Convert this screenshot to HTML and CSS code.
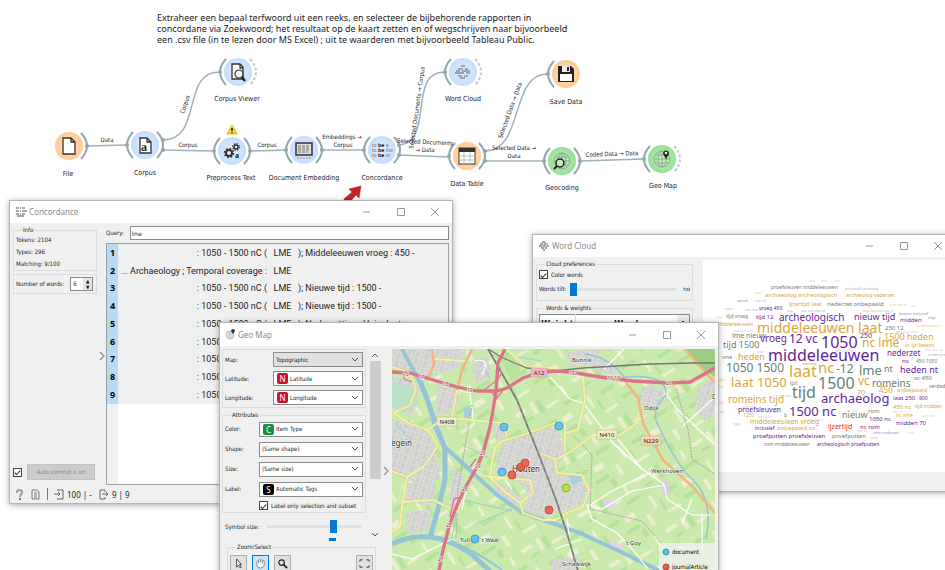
FILE: index.html
```
<!DOCTYPE html>
<html lang="nl">
<head>
<meta charset="utf-8">
<title>Orange workflow</title>
<link rel="stylesheet" href="styles.css">
</head>
<body>
<main class="desktop">
<p class="annotation">Extraheer een bepaal terfwoord uit een reeks, en selecteer de bijbehorende rapporten in<br>concordane via Zoekwoord; het resultaat op de kaart zetten en of wegschrijven naar bijvoorbeeld<br>een .csv file (in te lezen door MS Excel) ; uit te waarderen met bijvoorbeeld Tableau Public.</p>

<svg class="workflow" width="945" height="210" viewBox="0 0 945 210">
  <defs>
    <radialGradient id="blue"><stop offset="0" stop-color="#e3eefe"/><stop offset="1" stop-color="#c5ddfb"/></radialGradient>
    <radialGradient id="orange"><stop offset="0" stop-color="#ffe6c8"/><stop offset="1" stop-color="#ffcb93"/></radialGradient>
    <radialGradient id="green"><stop offset="0" stop-color="#c9f5c6"/><stop offset="1" stop-color="#93e092"/></radialGradient>
    <g id="in"><path class="arc" d="M-12-13Q-24 0-12 13"/><circle class="port" cx="-18" cy="0" r="2"/></g>
    <path id="out" class="arc" d="M12-13Q24 0 12 13"/>
    <path id="none" class="arc dashed" d="M12-13Q24 0 12 13"/>
    <g id="globe" fill="none" stroke="#93ab93" stroke-width="1"><circle r="8"/><ellipse rx="4" ry="8"/><path d="M-8 0H8M0-8V8M-7-4H7M-7 4H7"/></g>
  </defs>
  <g class="links">
    <path d="M87 146L127 145"/>
    <path d="M163 140C203 140 181 72 219 72"/>
    <path d="M163 150L213 151"/>
    <path d="M251 151L285 150"/>
    <path d="M322 150H363"/>
    <path d="M400 145C434 140 408 72 444 72"/>
    <path d="M400 155L448 157"/>
    <path d="M486 151C524 150 510 74 547 74"/>
    <path d="M486 161H543"/>
    <path d="M580 161L644 159"/>
  </g>
  <g class="port">
    <circle cx="87" cy="146" r="2"/><circle cx="163" cy="140" r="2"/><circle cx="163" cy="150" r="2"/><circle cx="250" cy="151" r="2"/><circle cx="322" cy="150" r="2"/><circle cx="399" cy="145" r="2"/><circle cx="399" cy="155" r="2"/><circle cx="485" cy="151" r="2"/><circle cx="485" cy="161" r="2"/><circle cx="580" cy="161" r="2"/>
  </g>
  <g transform="translate(69 146)"><circle r="14" fill="url(#orange)"/><use href="#out"/><path d="M-6-8H2L6-4V8H-6ZM2-8V-4H6" fill="#fff" stroke="#333" stroke-width="1.3"/></g>
  <g transform="translate(145 145)"><circle r="14" fill="url(#blue)"/><use href="#in"/><use href="#out"/><path d="M-5-7H2L6-3V8H-5ZM2-7V-3H6" fill="#fff" stroke="#333" stroke-width="1.3"/><text class="glyph" x="-4" y="6">a</text></g>
  <g transform="translate(238 72)"><circle r="14" fill="url(#blue)"/><use href="#in"/><use href="#none"/><path d="M-6-8H2L5-5V7H-6ZM2-8V-4H5" fill="#fff" stroke="#333" stroke-width="1.3"/><circle cx="1" cy="2" r="4" fill="#eef5fe" stroke="#333" stroke-width="1.2"/><path d="M4 5L7 9" stroke="#222" stroke-width="2.5"/></g>
  <g transform="translate(232 151)"><circle r="14" fill="url(#blue)"/><use href="#in"/><use href="#out"/><g fill="none" stroke="#333"><circle cx="-3" cy="2" r="3" stroke-width="2"/><circle cx="-3" cy="2" r="4.500" stroke-width="1.500" stroke-dasharray="1.800 1.700"/><circle cx="4" cy="-4" r="2" stroke-width="1.500"/><circle cx="4" cy="-4" r="3.300" stroke-width="1.300" stroke-dasharray="1.400 1.200"/></g><text class="glyph small" x="3" y="7">a</text></g>
  <path d="M232 125L237 134H227Z" fill="#ffd51e" stroke="#e6b400" stroke-width="1"/><path d="M232 128V131M232 132V133" stroke="#222" stroke-width="1.500"/>
  <g transform="translate(304 150)"><circle r="14" fill="url(#blue)"/><use href="#in"/><use href="#out"/><rect x="-8" y="-7" width="16" height="12" fill="#ddd" stroke="#333" stroke-width="1.500"/><path d="M-6-4H6M-6-2H6M-6 0H6M-6 2H4" stroke="#777" stroke-width="1" stroke-dasharray="3 1"/><path d="M-7 8H7" stroke="#aab" stroke-width="1.500" stroke-dasharray="2 1"/></g>
  <g transform="translate(382 150)"><circle r="14" fill="url(#blue)"/><use href="#in"/><use href="#out"/><g class="tobe"><text x="-10" y="-3">to <tspan>be</tspan> a</text><text x="-10" y="2">to <tspan>be</tspan> the</text><text x="-10" y="7">to <tspan>be</tspan> or</text></g></g>
  <g transform="translate(463 72)"><circle r="14" fill="url(#blue)"/><use href="#in"/><use href="#none"/><path d="M-2-6H2M-5-3H0M2-3H5M-7-1H-3M-1-1H7M-8 1H1M3 1H7M-5 4H-1M1 4H5M-3 6H2" stroke="#56636f" stroke-width="1.200"/></g>
  <g transform="translate(467 156)"><circle r="14" fill="url(#orange)"/><use href="#in"/><use href="#out"/><rect x="-8" y="-8" width="16" height="16" fill="#fff" stroke="#333"/><rect x="-8" y="-8" width="16" height="4" fill="#333"/><path d="M-3-4V8M3-4V8M-8 0H8M-8 4H8" stroke="#bbb" stroke-width="1"/></g>
  <g transform="translate(566 74)"><circle r="14" fill="url(#orange)"/><use href="#in"/><path d="M-8-8H5L8-5V8H-8Z" fill="#222"/><rect x="-4" y="-8" width="8" height="6" fill="#eee"/><rect x="1" y="-7" width="2" height="4" fill="#222"/><rect x="-6" y="0" width="12" height="7" fill="#fff"/></g>
  <g transform="translate(562 161)"><circle r="14" fill="url(#green)"/><use href="#in"/><use href="#out"/><use href="#globe"/><circle cx="-2" cy="2" r="4" fill="#bfe8bd" stroke="#222" stroke-width="1.500"/><path d="M-5 5L-8 8" stroke="#222" stroke-width="2"/></g>
  <g transform="translate(662 159)"><circle r="14" fill="url(#green)"/><use href="#in"/><use href="#none"/><use href="#globe"/><path d="M4 0L1-5A3 3.500 0 1 1 7-5Z" fill="#222"/><circle cx="4" cy="-6" r="1.300" fill="#fff"/></g>
  <g class="names">
    <text x="68" y="176">File</text><text x="145" y="175">Corpus</text><text x="237" y="101">Corpus Viewer</text><text x="231" y="180">Preprocess Text</text><text x="304" y="180">Document Embedding</text><text x="382" y="180">Concordance</text><text x="463" y="101">Word Cloud</text><text x="467" y="186">Data Table</text><text x="566" y="104">Save Data</text><text x="562" y="190">Geocoding</text><text x="663" y="188">Geo Map</text>
  </g>
  <g class="channels">
    <text x="107" y="142">Data</text><text x="188" y="147">Corpus</text><text x="267" y="147">Corpus</text><text x="342" y="139">Embeddings →</text><text x="343" y="147">Corpus</text><text transform="translate(425 144) rotate(3)">Selected Documents</text><text x="425" y="152">→ Data</text><text x="514" y="150">Selected Data →</text><text x="514" y="158">Data</text><text transform="translate(612 156) rotate(-2)">Coded Data → Data</text><text transform="translate(187 105) rotate(-72)">Corpus</text><text transform="translate(419 108) rotate(-82)">Selected Documents → Corpus</text><text transform="translate(512 111) rotate(-70)">Selected Data → Data</text>
  </g>
  <path d="M361 186L349 189L352 192L344 199V204H348L356 195L359 198Z" fill="#c8222b" stroke="#a3262c" stroke-width="0.500"/>
</svg>

<section class="window concordance" aria-label="Concordance">
  <header class="titlebar">
    <svg class="app" viewBox="0 0 12 10" width="12" height="10"><path d="M1 1H4M1 4H4M1 7H4M5 1H6M5 4H6M5 7H6M7 1H10M7 4H12M7 7H10M2 9H9" stroke="#888" stroke-width="1.300"/></svg>
    <h2>Concordance</h2>
    <button class="wbtn" aria-label="Minimize"><svg viewBox="0 0 8 8"><path d="M0 4H7"/></svg></button><button class="wbtn" aria-label="Maximize"><svg viewBox="0 0 8 8"><path d="M0.500 0.500H7.500V7.500H0.500Z"/></svg></button><button class="wbtn" aria-label="Close"><svg viewBox="0 0 8 8"><path d="M0 0L8 8M8 0L0 8"/></svg></button>
  </header>
  <div class="conc-body">
    <aside class="conc-side">
      <fieldset class="group info"><legend>Info</legend><p>Tokens: 2104</p><p>Types: 296</p><p>Matching: 9/100</p></fieldset>
      <div class="group words"><label for="nw">Number of words:</label><span class="spin"><input id="nw" type="text" value="6"><span class="steps"><button aria-label="More">▲</button><button aria-label="Fewer">▼</button></span></span></div>
      <div class="commit"><input type="checkbox" class="check" checked aria-label="Auto commit"><button class="auto" disabled>Auto commit is on</button></div>
    </aside>
    <button class="collapse" aria-label="Collapse"><svg viewBox="0 0 5 8" width="5" height="8"><path d="M0 0L4 4L0 8"/></svg></button>
    <div class="conc-main">
      <div class="query"><label for="q">Query:</label><input id="q" type="text" value="lme"></div>
      <div class="sheet">
        <table>
          <tbody>
          <tr><th>1</th><td class="left">: 1050 - 1500 nC (</td><td class="key">LME</td><td>); Middeleeuwen vroeg : 450 -</td></tr>
          <tr><th>2</th><td class="left">... Archaeology ; Temporal coverage :</td><td class="key">LME</td><td></td></tr>
          <tr><th>3</th><td class="left">: 1050 - 1500 nC (</td><td class="key">LME</td><td>); Nieuwe tijd : 1500 -</td></tr>
          <tr><th>4</th><td class="left">: 1050 - 1500 nC (</td><td class="key">LME</td><td>); Nieuwe tijd : 1500 -</td></tr>
          <tr><th>5</th><td class="left">: 1050 - 1500 nC (</td><td class="key">LME</td><td>); Nederzetting ; Huisplaats</td></tr>
          <tr><th>6</th><td class="left">: 1050 - 1500 nC (</td><td class="key">LME</td><td></td></tr>
          <tr><th>7</th><td class="left">: 1050 - 1500 nC (</td><td class="key">LME</td><td></td></tr>
          <tr><th>8</th><td class="left">: 1050 - 1500 nC (</td><td class="key">LME</td><td></td></tr>
          <tr><th>9</th><td class="left">: 1050 - 1500 nC (</td><td class="key">LME</td><td></td></tr>
          </tbody>
        </table>
      </div>
    </div>
  </div>
  <footer class="status">
    <svg width="8" height="11" viewBox="0 0 8 11"><path d="M1 4C0 0 7 0 6 4C6 5 4 5 4 8M4 9V11" fill="none" stroke="#777" stroke-width="2"/><path d="M1 4C0 0 7 0 6 4C6 5 4 5 4 8" fill="none" stroke="#eee" stroke-width="0.700"/></svg>
    <svg width="9" height="11" viewBox="0 0 9 11"><path d="M1 1H6L8 3V10H1ZM3 4H6M3 6H6M3 8H6" fill="none" stroke="#777"/></svg>
    <i></i>
    <svg width="10" height="11" viewBox="0 0 10 11"><path d="M3 1H9V10H3M0 5H6M4 3L6 5L4 7" fill="none" stroke="#666"/></svg><span>100 | -</span>
    <svg width="10" height="11" viewBox="0 0 10 11"><path d="M6 3V1H1V10H6V8M3 5H9M7 3L9 5L7 7" fill="none" stroke="#666"/></svg><span>9 | 9</span>
  </footer>
</section>

<section class="window cloud" aria-label="Word Cloud">
  <header class="titlebar">
    <svg class="app" viewBox="0 0 12 10" width="12" height="10"><path d="M4 1H8M2 3H10M1 5H11M3 7H9M5 9H7" stroke="#888" stroke-width="1.300" stroke-dasharray="3 0.600"/></svg>
    <h2>Word Cloud</h2>
    <button class="wbtn" aria-label="Minimize"><svg viewBox="0 0 8 8"><path d="M0 4H7"/></svg></button><button class="wbtn" aria-label="Maximize"><svg viewBox="0 0 8 8"><path d="M0.500 0.500H7.500V7.500H0.500Z"/></svg></button><button class="wbtn" aria-label="Close"><svg viewBox="0 0 8 8"><path d="M0 0L8 8M8 0L0 8"/></svg></button>
  </header>
  <div class="cloud-body">
    <aside class="cloud-side">
      <fieldset class="group prefs"><legend>Cloud preferences</legend>
        <label class="tick"><input type="checkbox" class="check" checked>Color words</label>
        <div class="tilt"><label for="tilt">Words tilt:</label><input id="tilt" type="range" min="0" max="3" value="0"><span>no</span></div>
      </fieldset>
      <fieldset class="group weights"><legend>Words &amp; weights</legend>
        <table><thead><tr><th>Weight</th><th>Word</th><th class="up"><svg viewBox="0 0 6 4" width="6" height="4"><path d="M0 4L3 1L6 4"/></svg></th></tr></thead></table>
      </fieldset>
    </aside>
    <svg class="words-canvas" width="254" height="212" viewBox="0 0 254 212">
      <g stroke-width="1" stroke-dasharray="6 1">
        <path d="M106 21H113M118 21H125M131 21H137" stroke="#ddd"/><path d="M52 33H59M187 45H204M208 46H213" stroke="#f0d5a8"/><path d="M52 41H63M42 50H60M22 49H30M84 51H91M98 51H122M160 51H190" stroke="#cfc4dd"/><path d="M14 63H20M193 72H215M30 71H50M120 70H138M222 90H240" stroke="#d5dbd7"/><path d="M54 92H62M133 91H150M15 152H22M63 152H78M97 131H103M76 136H88M14 143H21M60 119H66" stroke="#d9cfe2"/><path d="M142 151H156M190 152H200M219 156H232M104 160H120M205 173H211M55 157H70" stroke="#d8ddda"/><path d="M100 104H114M132 135H143M154 171H164M40 147H52" stroke="#f1c9b5"/>
      </g>
      <g class="g">
        <text x="68" y="29" class="s5">proefsleuven middeleeuwen</text><text x="142" y="30" class="s4">inclusief verdedig</text><text x="124" y="46" class="s6">nederzet onbepaald</text><text x="23" y="58" class="s5">tijd vroeg</text><text x="182" y="70" class="s6">250 12</text><text x="29" y="78" class="s7">lme nieuw</text><text x="20" y="88" class="s9">tijd 1500</text><text x="19" y="99" class="s5">vme</text><text x="225" y="96" class="s4">onderzoek</text><text x="213" y="103" class="s5">450 1050</text><text x="23" y="112" class="s12">1050 1500</text><text x="133" y="113" class="s12">-12</text><text x="156" y="115" class="s13">lme</text><text x="181" y="112" class="s9">nt</text><text x="87" y="125" class="s6">ijzl</text><text x="89" y="138" class="s16">tijd</text><text x="115" y="129" class="s16">1500</text><text x="169" y="127" class="s10">romeins</text><text x="211" y="120" class="s6">vc 450</text><text x="226" y="128" class="s5">verdedig</text><text x="139" y="158" class="s9">nieuw</text><text x="165" y="153" class="s6">rom</text><text x="30" y="166" class="s4">150</text><text x="81" y="157" class="s5">b</text><text x="129" y="178" class="s6">proefputten</text><text x="61" y="186" class="s5">rom middeleeuwen</text>
      </g>
      <g class="o">
        <text x="62" y="37" class="s6">archaeolog archeologisch</text><text x="143" y="37" class="s5">archaeolog nederzet</text><text x="86" y="46" class="s6">ijzertijd laat</text><text x="13" y="59" class="s4">725</text><text x="15" y="66" class="s5">middeleeuwen</text><text x="54" y="73" class="s14">middeleeuwen laat</text><text x="212" y="67" class="s4">vondstanalys</text><text x="181" y="80" class="s9">1500 heden</text><text x="159" y="87" class="s12">nc lme</text><text x="202" y="87" class="s5">vc ijzl bewon</text><text x="35" y="100" class="s9">heden</text><text x="99" y="105" class="s4">coverag</text><text x="86" y="117" class="s16">laat</text><text x="115" y="113" class="s15">nc</text><text x="28" y="127" class="s13">laat 1050</text><text x="16" y="121" class="s4">gk7</text><text x="16" y="128" class="s4">nc</text><text x="155" y="125" class="s12">vc</text><text x="154" y="135" class="s7">70</text><text x="176" y="133" class="s8">450</text><text x="194" y="132" class="s6">onbepaald</text><text x="25" y="143" class="s10">romeins tijd</text><text x="190" y="149" class="s6">450 nc</text><text x="212" y="148" class="s5">tijd midden</text><text x="40" y="157" class="s5">1250</text><text x="193" y="157" class="s5">nc vme</text><text x="47" y="164" class="s7">middeleeuwen vroeg</text><text x="74" y="170" class="s6">onbepaald nx</text><text x="167" y="179" class="s4">terp</text>
      </g>
      <g class="p">
        <text x="34" y="42" class="s4">wierd</text><text x="56" y="50" class="s5">vroeg 450</text><text x="53" y="59" class="s6">tijd 12</text><text x="76" y="61" class="s10">archeologisch</text><text x="151" y="60" class="s9">nieuw tijd</text><text x="196" y="55" class="s4">bewon inclusief</text><text x="197" y="62" class="s6">midden</text><text x="225" y="59" class="s4">nhp</text><text x="57" y="82" class="s10">vroeg</text><text x="86" y="83" class="s12">12 vc</text><text x="118" y="88" class="s16">1050</text><text x="157" y="78" class="s7">250</text><text x="65" y="101" class="s16">middeleeuwen</text><text x="184" y="96" class="s8">nederzet</text><text x="199" y="103" class="s6">nx</text><text x="197" y="113" class="s9">heden nt</text><text x="118" y="143" class="s13">archaeolog</text><text x="190" y="140" class="s6">laat 250</text><text x="216" y="140" class="s5">900</text><text x="35" y="152" class="s7">proefsleuven</text><text x="86" y="156" class="s13">1500 nc</text><text x="166" y="161" class="s6">1050 nc</text><text x="193" y="165" class="s6">midden 70</text><text x="52" y="170" class="s5">inclusief</text><text x="157" y="169" class="s6">nc rom</text><text x="50" y="178" class="s6">proefputten proefsleuven</text><text x="170" y="174" class="s4">vme nederzet</text><text x="114" y="186" class="s5">archeologisch proefputten</text>
      </g>
      <text x="125" y="169" class="s7 r">ijzertijd</text>
    </svg>
  </div>
</section>

<section class="window geo" aria-label="Geo Map">
  <header class="titlebar">
    <svg class="app" viewBox="0 0 11 11" width="11" height="11"><g fill="none" stroke="#bbb"><circle cx="5" cy="6" r="4"/><path d="M1 6H9M5 2V10M2 4H8M2 8H8"/></g><path d="M8 5L6 2A2 2 0 1 1 10 2Z" fill="#333"/></svg>
    <h2>Geo Map</h2>
    <button class="wbtn" aria-label="Minimize"><svg viewBox="0 0 8 8"><path d="M0 4H7"/></svg></button><button class="wbtn" aria-label="Maximize"><svg viewBox="0 0 8 8"><path d="M0.500 0.500H7.500V7.500H0.500Z"/></svg></button><button class="wbtn" aria-label="Close"><svg viewBox="0 0 8 8"><path d="M0 0L8 8M8 0L0 8"/></svg></button>
  </header>
  <div class="geo-body">
    <aside class="geo-side">
      <div class="geo-scroll">
        <div class="geo-controls">
          <div class="group place">
            <div class="field"><label for="map">Map:</label><span class="combo grey"><select id="map"><option>Topographic</option></select><svg viewBox="0 0 6 4" width="6" height="4"><path d="M0 0L3 3L6 0"/></svg></span></div>
            <div class="field"><label for="lat">Latitude:</label><span class="combo"><b class="red">N</b><select id="lat"><option>Latitude</option></select><svg viewBox="0 0 6 4" width="6" height="4"><path d="M0 0L3 3L6 0"/></svg></span></div>
            <div class="field"><label for="lon">Longitude:</label><span class="combo"><b class="red">N</b><select id="lon"><option>Longitude</option></select><svg viewBox="0 0 6 4" width="6" height="4"><path d="M0 0L3 3L6 0"/></svg></span></div>
          </div>
          <fieldset class="group attrs"><legend>Attributes</legend>
            <div class="field"><label for="col">Color:</label><span class="combo"><b class="grn">C</b><select id="col"><option>Item Type</option></select><svg viewBox="0 0 6 4" width="6" height="4"><path d="M0 0L3 3L6 0"/></svg></span></div>
            <div class="field"><label for="shp">Shape:</label><span class="combo"><select id="shp"><option>(Same shape)</option></select><svg viewBox="0 0 6 4" width="6" height="4"><path d="M0 0L3 3L6 0"/></svg></span></div>
            <div class="field"><label for="siz">Size:</label><span class="combo"><select id="siz"><option>(Same size)</option></select><svg viewBox="0 0 6 4" width="6" height="4"><path d="M0 0L3 3L6 0"/></svg></span></div>
            <div class="field"><label for="lab">Label:</label><span class="combo"><b class="blk">S</b><select id="lab"><option>Automatic Tags</option></select><svg viewBox="0 0 6 4" width="6" height="4"><path d="M0 0L3 3L6 0"/></svg></span></div>
            <label class="tick only"><input type="checkbox" class="check" checked>Label only selection and subset</label>
          </fieldset>
          <div class="slide"><label for="sym">Symbol size:</label><input id="sym" type="range" min="0" max="100" value="72"></div>
          <div class="slide next"><span></span><input type="range" min="0" max="100" value="71" aria-label="Opacity"></div>
        </div>
        <div class="scrollbar"><button aria-label="Scroll up"><svg viewBox="0 0 6 4" width="6" height="4"><path d="M0 4L3 1L6 4"/></svg></button><span></span><button aria-label="Scroll down"><svg viewBox="0 0 6 4" width="6" height="4"><path d="M0 0L3 3L6 0"/></svg></button></div>
      </div>
      <fieldset class="group zoom"><legend>Zoom/Select</legend>
        <button aria-label="Select"><svg viewBox="0 0 12 12"><path d="M4 1V10L6 8L8 11L9 10L7 7H9Z" fill="#fff" stroke="#222" stroke-width="0.900"/></svg></button>
        <button class="on" aria-label="Pan"><svg viewBox="0 0 12 12"><path d="M2 5V8Q3 11 6 11T10 8V3Q9 2 8 3Q7 1 6 2Q5 1 4 3Q2 3 2 5M4 3V6M6 2V5M8 3V6" fill="#fff" stroke="#777" stroke-width="0.900"/></svg></button>
        <button aria-label="Zoom"><svg viewBox="0 0 12 12"><circle cx="5" cy="5" r="3" fill="none" stroke="#222" stroke-width="1.300"/><path d="M7 7L11 11" stroke="#222" stroke-width="2"/></svg></button>
        <button class="fit" aria-label="Zoom to fit"><svg viewBox="0 0 12 12"><path d="M1 4V2H4M8 2H11V4M11 8V10H8M4 10H1V8" fill="none" stroke="#333"/></svg></button>
      </fieldset>
    </aside>
    <button class="collapse" aria-label="Collapse"><svg viewBox="0 0 5 8" width="5" height="8"><path d="M0 0L4 4L0 8"/></svg></button>
    <svg class="map" viewBox="0 0 323 260" preserveAspectRatio="xMinYMin slice">
      <defs>
        <pattern id="fields" width="67" height="59" patternUnits="userSpaceOnUse" patternTransform="rotate(-32)">
          <rect width="67" height="59" fill="#caeaae"/>
          <path d="M2 3H14V7H2ZM20 1H24V14H20ZM33 12H47V15H33ZM5 25H8V39H5ZM40 30H51V36H40ZM55 3H58V13H55ZM14 47H29V50H14ZM60 40H64V52H60Z" fill="#ebefcf"/>
          <path d="M26 2H31V16H26ZM8 13H17V16H8ZM50 18H66V22H50ZM20 28H35V32H20ZM12 34H15V45H12ZM35 43H50V47H35ZM48 50H53V58H48Z" fill="#b6e29b"/>
          <path d="M0 20H30M30 0V59M30 38H67M45 0V30" stroke="#b9e1b4" stroke-width="0.600"/>
        </pattern>
        <pattern id="town" width="9" height="8" patternUnits="userSpaceOnUse" patternTransform="rotate(17)"><rect width="9" height="8" fill="#cfcfcd"/><path d="M0 1H9M2 0V8M6 1V8M2 5H6" stroke="#e6e6e4" stroke-width="0.700" fill="none"/></pattern>
      </defs>
      <rect width="323" height="260" fill="url(#fields)"/>
      <g fill="url(#town)">
        <path d="M0 0H40L42 26L28 32L15 20L0 18ZM42 0H74L68 18L43 26ZM45 35L66 41L64 62L44 66ZM0 26L18 32L28 40L20 66L0 60ZM0 70L14 75L33 82L44 98L48 130L30 135L12 130L0 122ZM12 134L44 134L40 158L12 150ZM14 164L40 160L36 182L16 184ZM60 120L72 126L66 148L57 160ZM82 10L96 9L99 26L86 34L80 24Z"/>
        <path d="M115 90L163 78L174 104L165 118L168 126H186L196 142L188 156L165 164L152 168L132 162L136 144L116 122L104 128L105 104ZM100 75L114 78L116 86L104 92ZM102 130L118 140L130 150L126 158L104 146Z"/>
        <path d="M175 3L205 0L210 9L230 24L214 25L196 16L178 18ZM250 38L260 36L272 42L271 56L258 63L248 52ZM306 40L323 26V66L312 72L303 60ZM268 134L278 132L277 146L271 147ZM160 210L188 208L186 221H160Z"/>
      </g>
      <path d="M292 0H323V28L310 20Z" fill="#9ccd83"/><path d="M100 6H115L128 20L120 34L109 12Z" fill="#b9e29b"/>
      <path d="M0 32L20 40L28 54L10 64L0 58Z" fill="#b9e2c6"/><path d="M60 150H70L64 170ZM212 150L224 152L222 160L212 157ZM218 192L232 196L230 202L218 198Z" fill="#e3d3e3"/>
      <path d="M72 60Q78 54 79 62T72 69ZM177 128L187 122L190 132L180 136Z" fill="#a3d1dc"/>
      <g fill="none" stroke="#94c4d6">
        <path d="M10 0L25 28L35 48L43 78L53 98L78 121L105 146L131 164L163 175L188 184L225 201L268 222" stroke-width="4"/>
        <path d="M28 32L36 52L45 80L53 99V131L45 164L38 188" stroke-width="5"/>
        <path d="M0 195Q18 186 38 188T78 204L98 222" stroke-width="5"/><path d="M66 196Q84 202 110 221M38 187L68 197" stroke-width="2"/>
        <path d="M192 5Q218 8 232 28Q275 24 274 46Q258 62 266 76Q286 118 300 130Q322 150 314 190" stroke-width="1.500"/><path d="M66 150L120 162M92 18L98 30M60 190L64 165M126 8L150 12M70 95L98 110M4 75L20 92M86 174L120 160" stroke-width="0.800"/>
      </g>
      <g fill="none" stroke="#fff" stroke-width="1.200">
        <path d="M158 28L178 50L191 54L222 95L250 120L272 135L275 150L300 166L318 166M272 136L240 142L210 160L195 156L200 170L225 184L240 200L256 220M250 120L224 88M195 158L220 142L262 122M323 48L290 78M274 44L285 60L323 96M310 165V200M300 150L290 175M70 160L76 130M78 45L82 76M0 205L20 210L60 190M175 170L180 210M120 140L105 120M90 26Q100 8 82 12M163 200L190 190M232 0L212 20"/>
      </g>
      <path d="M80 56L66 140L64 190M181 86L200 106L198 160L250 172L270 195M284 40L296 80L300 110L323 125" fill="none" stroke="#a7a7a7" stroke-width="1" stroke-dasharray="2 1"/>
      <g fill="none">
        <path id="roads" stroke="#cfce8c" stroke-width="2.600" d="M0 18L18 24L24 40L18 56L2 64L16 74L36 81L45 74L60 69L111 74L115 88M36 81L46 96L40 106L31 118L15 128L10 158L8 178L0 183M0 122L15 128M10 153L41 151L66 163L70 150M65 41L60 69M163 74L131 86L110 92L103 99L100 114L98 128L111 141L128 154L131 164L151 171L163 171L175 164L191 158L197 141L190 126L165 124L163 111L178 103L201 86L228 86L245 74L246 63M85 124L98 128L138 131L141 144L128 154M173 74L173 103M191 28L193 51L186 81L173 84M114 0L128 12L134 18L163 19M42 10L74 12M163 110L150 105M65 41L78 44"/>
        <path stroke="#f6f3a8" stroke-width="1.800" d="M0 18L18 24L24 40L18 56L2 64L16 74L36 81L45 74L60 69L111 74L115 88M36 81L46 96L40 106L31 118L15 128L10 158L8 178L0 183M0 122L15 128M10 153L41 151L66 163L70 150M65 41L60 69M163 74L131 86L110 92L103 99L100 114L98 128L111 141L128 154L131 164L151 171L163 171L175 164L191 158L197 141L190 126L165 124L163 111L178 103L201 86L228 86L245 74L246 63M85 124L98 128L138 131L141 144L128 154M173 74L173 103M191 28L193 51L186 81L173 84M114 0L128 12L134 18L163 19M42 10L74 12M163 110L150 105M65 41L78 44"/>
      </g>
      <path d="M40 0L42 16L36 28M80 0L70 21L65 41M230 28L246 49L251 74L271 111L301 138L323 164M293 0L323 34" fill="none" stroke="#f2b47c" stroke-width="2.400"/>
      <path d="M96 0L111 9L135 19L163 22L191 19L258 15L301 14H323" fill="none" stroke="#777" stroke-width="1.300"/>
      <path d="M96 0L108 21L125 51L145 101L163 148L175 184L186 222" fill="none" stroke="#777" stroke-width="1.800"/><path d="M96 0L108 21L125 51L145 101L163 148L175 184L186 222" fill="none" stroke="#aaa" stroke-width="0.700" stroke-dasharray="4 4"/>
      <g fill="none" stroke="#dd728a" stroke-width="3.300" stroke-linejoin="round">
        <path d="M0 23L18 24L38 30L65 38L85 42H105L115 39L131 29L145 24L163 22L178 23L208 28L241 32L278 34L298 33L323 19"/>
        <path d="M113 0L106 14L104 43L98 78L91 104L85 118L73 139L63 161L57 178L51 201L47 222"/>
        <path d="M92 41L104 32L110 24M104 48L98 42M112 40L104 50M12 22V30L20 33M84 110L78 118M58 168L62 150L70 148" stroke-width="1.300"/>
      </g>
      <g class="exits"><text x="11" y="27">16</text><text x="27" y="30">17</text><text x="51" y="37">18</text><text x="75" y="43">19</text><text x="177" y="26">18a</text><text x="215" y="31">19-19</text><text x="274" y="36">20</text><text x="88" y="106">29</text><text x="83" y="119">29</text><text x="70" y="142">28</text><text x="54" y="178">28</text><text x="46" y="212">27</text></g>
      <g class="shields"><rect x="45" y="68" width="20" height="9" fill="#eef0c8"/><text x="55" y="75">N408</text><rect x="139" y="19" width="16" height="9" fill="#f2b5c4"/><text x="147" y="26">A12</text><rect x="205" y="81" width="20" height="9" fill="#eef0c8"/><text x="215" y="88">N410</text><rect x="249" y="87" width="20" height="9" fill="#f8d8b4"/><text x="259" y="94">N229</text></g>
      <g class="places"><text x="-5" y="97" class="s8">vegein</text><text x="120" y="123" class="s8">Houten</text><text x="68" y="193" class="s6">Tull en 't Waal</text><text x="180" y="13" class="s6">Bunnik</text><text x="252" y="61" class="s6">Odijk</text><text x="259" y="124" class="s6">Werkhoven</text><text x="233" y="196" class="s6">'t Goy</text><text x="170" y="217" class="s6">Schalkwijk</text><text x="320" y="50" class="s7">D</text></g>
      <g class="dots"><g fill="#56c1f2" stroke="#3b93bd"><circle cx="112" cy="78" r="4"/><circle cx="110" cy="123" r="4"/><circle cx="83" cy="190" r="4"/><circle cx="167" cy="77" r="4"/></g><g fill="#ea5b43" stroke="#b4432f"><circle cx="120" cy="126" r="4"/><circle cx="129" cy="118" r="4"/><circle cx="133" cy="114" r="4"/><circle cx="157" cy="161" r="4"/></g><circle cx="174" cy="139" r="4" fill="#afe136" stroke="#86ad2b"/></g>
      <rect x="267" y="194" width="56" height="50" fill="#eef1ea" fill-opacity="0.850"/>
      <circle cx="274" cy="203" r="3" fill="#56c1f2" stroke="#3b93bd"/><circle cx="274" cy="218" r="3" fill="#ea5b43" stroke="#b4432f"/>
      <g class="legend"><text x="280" y="205">document</text><text x="280" y="220">journalArticle</text></g>
    </svg>
  </div>
</section>
</main>
</body>
</html>
```
FILE: styles.css
```
* { box-sizing: border-box; }
body { margin: 0; background: #fff; font: 6px/8px "DejaVu Sans Condensed", "DejaVu Sans", sans-serif; color: #1c1c1c; }
p, h2 { margin: 0; font-weight: normal; }
button, input, select { font: inherit; color: inherit; margin: 0; padding: 0; }
button { background: none; border: 0; }
.desktop { position: relative; min-height: 100vh; height: 100vh; overflow: hidden; }
.annotation { position: absolute; left: 157px; top: 12px; font: 9px/11px "Noto Sans", sans-serif; white-space: nowrap; }

/* workflow diagram */
.workflow { position: absolute; left: 0; top: 0; }
.arc { fill: none; stroke: #94a6af; stroke-width: 2; }
.dashed { stroke: #bfc9ce; stroke-dasharray: 3 2; }
.links path { fill: none; stroke: #9fb0b9; stroke-width: 1.5; }
.port { fill: #94a6af; }
.names { font-size: 7px; text-anchor: middle; fill: #222; }
.channels { font-size: 6px; text-anchor: middle; fill: #222; }
.glyph { font: bold 12px "Liberation Serif", serif; fill: #222; }
.glyph.small { font-size: 8px; }
.tobe { font-size: 5px; fill: #555; }
.tobe tspan { font-weight: bold; fill: #222; }

/* windows */
.window { position: absolute; display: flex; flex-direction: column; background: #f0f0f0; border: 1px solid #b4b4b4; box-shadow: 0 1px 6px rgba(0, 0, 0, .35); }
.concordance { left: 9px; top: 200px; width: 444px; height: 304px; }
.cloud { left: 532px; top: 234px; right: -11px; height: 258px; }
.geo { left: 219px; top: 322px; width: 500px; height: 280px; }
.titlebar { display: flex; align-items: center; height: 22px; flex: none; background: #fff; padding-left: 5px; }
.geo .titlebar { height: 23px; }
.titlebar h2 { flex: 1; font: 8px/12px "Noto Sans", sans-serif; color: #8c8c8c; padding-left: 2px; }
.wbtn { width: 34px; height: 20px; display: flex; align-items: center; justify-content: center; }
.wbtn svg { width: 8px; height: 8px; fill: none; stroke: #999; stroke-width: 1; overflow: visible; }
.group { border: 1px solid #dcdcdc; margin: 0; padding: 0; min-width: 0; }
.group legend { margin-left: 6px; padding: 0 1px; }
.collapse { display: flex; align-items: center; justify-content: center; }
.collapse svg { fill: none; stroke: #999; stroke-width: 1.5; overflow: visible; }
.check { appearance: none; width: 9px; height: 9px; border: 1px solid #444; background: #fff; flex: none; display: grid; place-items: center; }
.check:checked::after { content: ""; width: 2px; height: 5px; border: solid #333; border-width: 0 1px 1px 0; transform: rotate(45deg); }
.tick { display: flex; align-items: center; gap: 3px; }
input[type="range"] { appearance: none; background: none; height: 13px; min-width: 0; flex: 1; }
input[type="range"]::-webkit-slider-runnable-track { height: 3px; background: #dfe2e2; }
input[type="range"]::-webkit-slider-thumb { appearance: none; width: 7px; height: 13px; margin-top: -5px; background: #0078d7; }

/* concordance */
.conc-body { flex: 1; display: grid; grid-template-columns: 85px 8px 1fr; padding: 3px 3px 0; min-height: 0; }
.conc-side { display: flex; flex-direction: column; }
.info { height: 45px; width: 84px; padding-left: 2px; }
.info p { height: 12px; line-height: 12px; }
.words { display: flex; align-items: center; gap: 6px; width: 84px; height: 20px; margin-top: 3px; padding-left: 2px; }
.spin { display: flex; width: 23px; height: 14px; border: 1px solid #888; background: #fff; }
.spin input { width: 12px; border: 0; padding-left: 2px; background: none; }
.steps { flex: 1; display: flex; flex-direction: column; background: #e6e6e6; }
.steps button { height: 6px; font-size: 5px; line-height: 6px; }
.commit { display: flex; align-items: center; gap: 5px; margin-top: auto; margin-bottom: 5px; }
.auto { width: 68px; height: 16px; background: #ccc; border: 1px solid #c2c2c2; color: #888; }
.conc-main { display: flex; flex-direction: column; gap: 3px; min-width: 0; }
.query { display: flex; align-items: center; gap: 6px; }
.query input { flex: 1; height: 14px; border: 1px solid #8a8a8a; background: #fff; padding: 0 1px; min-width: 0; }
.sheet { flex: 1; border: 1px solid #9aa0a8; background: linear-gradient(90deg, #f0f0f0 11px, #fff 11px); min-height: 0; }
.sheet table { width: 100%; height: 160px; border-collapse: collapse; table-layout: fixed; font: 9px/12px Roboto, "Noto Sans", sans-serif; color: #222; background: #f0f0f0; }
.sheet td, .sheet th { padding: 0; white-space: nowrap; vertical-align: middle; }
.sheet th { width: 11px; background: #b9daf3; font-family: "Noto Sans", sans-serif; font-size: 9px; color: #000; }
.sheet .left { width: 149px; text-align: right; }
.sheet .key { width: 31px; text-align: center; }
.status { display: flex; align-items: center; gap: 4px; height: 18px; padding-left: 6px; font: 8px/11px "Noto Sans", sans-serif; }
.status svg + svg { margin-left: 3px; }
.status i { width: 1px; height: 12px; background: #777; margin: 0 2px 0 3px; }
.status span { margin-right: 3px; margin-left: -1px; }

/* word cloud */
.cloud-body { display: grid; grid-template-columns: 157px 1fr; gap: 10px; padding: 3px 0 0 3px; }
.words-canvas { background: #fff; }
.words-canvas text, .places, .shields, .exits { font-family: "Noto Sans", sans-serif; }
.prefs { height: 41px; padding: 2px 2px 0; }
.tilt { display: flex; align-items: center; gap: 4px; height: 20px; }
.tilt span { margin-left: 3px; }
.weights { margin-top: 3px; padding: 2px 2px 0; }
.weights table { width: 100%; border-collapse: collapse; border: 1px solid #888; background: #fff; font-size: 9px; line-height: 19px; }
.weights th { padding: 0; }
.weights th:first-child { width: 36px; border-right: 1px solid #ddd; }
.weights .up { width: 13px; background: #eaeaea; vertical-align: top; line-height: 12px; }
.up svg { fill: none; stroke: #444; }
.s4 { font-size: 4px; opacity: .6; }
.s5 { font-size: 5px; }
.s6 { font-size: 6px; }
.s7 { font-size: 7px; }
.s8 { font-size: 8px; }
.s9 { font-size: 9px; }
.s10 { font-size: 10px; }
.s12 { font-size: 12px; }
.s13 { font-size: 13px; }
.s14 { font-size: 14px; }
.s15 { font-size: 15px; }
.s16 { font-size: 16px; }
.g { fill: #6b8176; }
.o { fill: #dba640; }
.p { fill: #5f2699; }
.r { fill: #ed1c24; }

/* geo map */
.geo-body { flex: 1; display: grid; grid-template-columns: 159px 11px 1fr; padding: 3px 3px 0 2px; min-height: 0; }
.geo-side { display: flex; flex-direction: column; gap: 2px; min-width: 0; }
.geo-scroll { display: flex; height: 192px; gap: 3px; overflow: hidden; }
.geo-controls { flex: 1; min-width: 0; }
.field { display: grid; grid-template-columns: 1fr 90px; align-items: center; height: 19px; }
.attrs .field { grid-template-columns: 1fr 104px; height: 20px; }
.place { padding: 0 2px; }
.attrs { margin-top: 3px; padding: 0 2px; height: 102px; }
.combo { display: flex; align-items: center; height: 15px; border: 1px solid #8c8c8c; background: #fff; padding: 0 4px 0 2px; }
.combo.grey { background: #e1e1e1; }
.combo select { appearance: none; flex: 1; min-width: 0; border: 0; background: none; height: 12px; }
.combo svg, .scrollbar svg { fill: none; stroke: #555; stroke-width: 1; overflow: visible; }
.combo b { width: 11px; height: 11px; margin: 0 2px 0 1px; border-radius: 2px; color: #fff; text-align: center; font: 8px/11px "Noto Sans", sans-serif; }
.red { background: #c8102e; }
.grn { background: #17923f; }
.blk { background: #000; }
.only { margin: 2px 0 0 34px; white-space: nowrap; }
.slide { display: grid; grid-template-columns: 42px 95px; align-items: center; height: 19px; margin-top: 4px; padding-left: 3px; }
.slide input { width: 100%; }
.next { height: 13px; margin-top: 2px; }
.scrollbar { width: 12px; display: flex; flex-direction: column; align-items: center; justify-content: space-between; }
.scrollbar span { width: 11px; flex: 1; margin-bottom: 50px; background: #cdcdcd; }
.scrollbar button { height: 12px; width: 12px; display: flex; align-items: center; justify-content: center; }
.zoom { display: flex; gap: 5px; margin: 0 5px; padding: 4px 2px; }
.zoom button { width: 17px; height: 17px; padding: 2px; border: 1px solid #adadad; background: #e1e1e1; }
.zoom svg { display: block; width: 11px; height: 11px; }
.zoom .on { background: #cce4f7; border-color: #0078d7; }
.zoom .fit { margin-left: auto; }
.geo .collapse { height: 244px; }
.map { width: 100%; height: 260px; display: block; }
.exits { font-size: 5px; fill: #8f1230; stroke: #fff; stroke-width: 1; paint-order: stroke; }
.shields { font-size: 6px; fill: #222; text-anchor: middle; }
.shields rect { stroke: #b5a98e; stroke-width: .5; }
.places { fill: #333; stroke: rgba(255, 255, 255, .7); stroke-width: 1; paint-order: stroke; }
.dots { opacity: .9; }
.legend { font-size: 6px; }
```
